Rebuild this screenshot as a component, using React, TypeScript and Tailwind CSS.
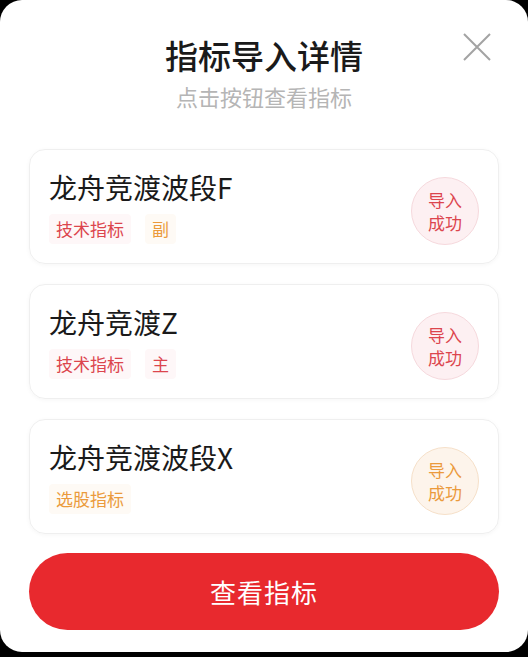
import React from 'react';

type Tone = 'red' | 'orange';

interface Indicator {
  name: string;
  tags: { label: string; tone: Tone }[];
  status: Tone;
}

const indicators: Indicator[] = [
  {
    name: '龙舟竞渡波段F',
    tags: [
      { label: '技术指标', tone: 'red' },
      { label: '副', tone: 'orange' },
    ],
    status: 'red',
  },
  {
    name: '龙舟竞渡Z',
    tags: [
      { label: '技术指标', tone: 'red' },
      { label: '主', tone: 'red' },
    ],
    status: 'red',
  },
  {
    name: '龙舟竞渡波段X',
    tags: [{ label: '选股指标', tone: 'orange' }],
    status: 'orange',
  },
];

const Tag = ({ label, tone }: { label: string; tone: Tone }) => (
  <span
    className={
      tone === 'red'
        ? 'px-[7px] h-[30px] flex items-center rounded-[4px] bg-[#fef7f8] text-[#dc454d] text-[17px]'
        : 'px-[7px] h-[30px] flex items-center rounded-[4px] bg-[#fefaf5] text-[#eb9a3c] text-[17px]'
    }
  >
    {label}
  </span>
);

const StatusBadge = ({ tone }: { tone: Tone }) => (
  <div
    className={
      tone === 'red'
        ? 'w-[68px] h-[68px] rounded-full border border-[#f6d9dd] bg-[#fdf0f2] text-[#dc454d] flex flex-col items-center justify-center text-[17px] leading-[23px] mt-[9px]'
        : 'w-[68px] h-[68px] rounded-full border border-[#f6e0c9] bg-[#fdf4eb] text-[#eb9a3c] flex flex-col items-center justify-center text-[17px] leading-[23px] mt-[9px]'
    }
  >
    <span>导入</span>
    <span>成功</span>
  </div>
);

export default function App() {
  return (
    <div
      className="w-[528px] h-[657px] bg-black"
      style={{ fontFamily: '"Noto Sans CJK SC", "Noto Sans", sans-serif' }}
    >
      <div className="relative h-[652px] bg-white rounded-[22px] px-[29px] pt-[34px]">
        {/* Close */}
        <button className="absolute right-[37px] top-[33px] w-[28px] h-[28px] text-[#a3a3a3]">
          <svg viewBox="0 0 28 28" className="w-full h-full" fill="none" stroke="currentColor" strokeWidth="2">
            <path d="M1 1 L27 27 M27 1 L1 27" />
          </svg>
        </button>

        {/* Header */}
        <div className="flex flex-col items-center">
          <div className="text-[33px] leading-[42px] font-medium text-[#1a1a1a]">指标导入详情</div>
          <div className="mt-[5px] text-[22px] leading-[30px] text-[#b5b5b5]">点击按钮查看指标</div>
        </div>

        {/* Indicator list */}
        <div className="mt-[38px] flex flex-col gap-[20px]">
          {indicators.map((item, i) => (
            <div
              key={i}
              className="h-[115px] rounded-[16px] border border-[#efefef] shadow-[0_1px_4px_rgba(0,0,0,0.04)] pl-[19px] pr-[19px] pt-[18px] flex items-start justify-between"
            >
              <div className="flex flex-col">
                <div className="text-[28px] leading-[38px] text-[#1a1a1a]">{item.name}</div>
                <div className="mt-[8px] flex gap-[14px]">
                  {item.tags.map((t, j) => (
                    <Tag key={j} label={t.label} tone={t.tone} />
                  ))}
                </div>
              </div>
              <StatusBadge tone={item.status} />
            </div>
          ))}
        </div>

        {/* Action */}
        <button className="mt-[19px] w-full h-[77px] rounded-full bg-[#e8292e] text-white text-[26px] tracking-[1px]">
          查看指标
        </button>
      </div>
    </div>
  );
}
